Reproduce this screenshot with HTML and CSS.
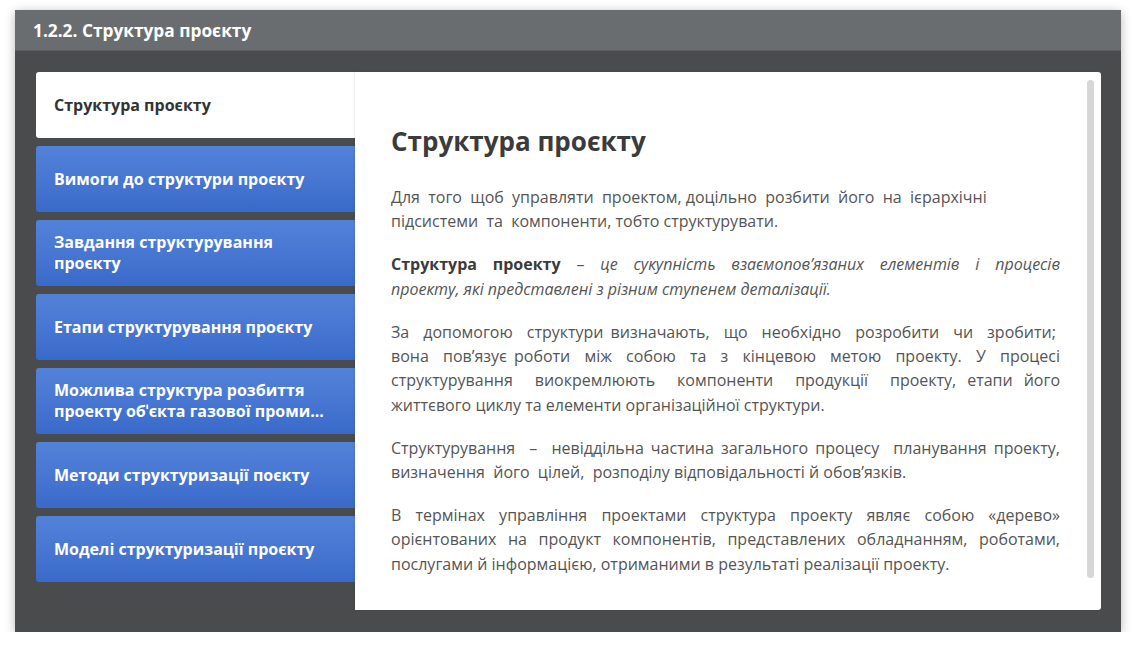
FILE: index.html
```html
<!DOCTYPE html>
<html lang="uk">
<head>
<meta charset="utf-8">
<link rel="stylesheet" href="styles.css">
</head>
<body>
<div class="window">
  <div class="titlebar">1.2.2. Структура проєкту</div>
  <div class="window-body">
    <div class="layout">
      <nav class="tabs">
        <div class="tab tab-active"><span>Структура проєкту</span></div>
        <div class="tab"><span>Вимоги до структури проєкту</span></div>
        <div class="tab"><span>Завдання структурування проєкту</span></div>
        <div class="tab"><span>Етапи структурування проєкту</span></div>
        <div class="tab"><span>Можлива структура розбиття проекту обˈєкта газової проми...</span></div>
        <div class="tab"><span>Методи структуризації поєкту</span></div>
        <div class="tab"><span>Моделі структуризації проєкту</span></div>
      </nav>
      <section class="panel">
        <article class="article">
          <h1 class="article-title">Структура проєкту</h1>
          <p class="para para-left">Для&nbsp; того&nbsp; щоб&nbsp; управляти&nbsp; проектом, доцільно&nbsp; розбити&nbsp; його&nbsp; на&nbsp; ієрархічні<br>підсистеми&nbsp; та&nbsp; компоненти, тобто структурувати.</p>
          <p class="para"><span class="line-just"><b class="term">Структура проекту</b> – <i>це сукупність взаємопов’язаних елементів і процесів</i></span><i>проекту, які представлені з різним ступенем деталізації.</i></p>
          <p class="para">За&nbsp; допомогою&nbsp; структури визначають,&nbsp; що&nbsp; необхідно&nbsp; розробити&nbsp; чи&nbsp; зробити;&nbsp; вона&nbsp; пов’язує роботи&nbsp; між&nbsp; собою&nbsp; та&nbsp; з&nbsp; кінцевою&nbsp; метою&nbsp; проекту.&nbsp; У&nbsp; процесі структурування&nbsp; виокремлюють&nbsp; компоненти&nbsp; продукції&nbsp; проекту, етапи його життєвого циклу та елементи організаційної структури.</p>
          <p class="para">Структурування&nbsp; –&nbsp; невіддільна частина загального процесу&nbsp; планування проекту, визначення&nbsp; його&nbsp; цілей,&nbsp; розподілу відповідальності й обов’язків.</p>
          <p class="para">В термінах управління проектами структура проекту являє собою «дерево» орієнтованих на продукт компонентів, представлених обладнанням, роботами, послугами й інформацією, отриманими в результаті реалізації проекту.</p>
        </article>
        <div class="scrollbar"></div>
      </section>
    </div>
  </div>
</div>
</body>
</html>
```
FILE: styles.css
```css
html, body {
  margin: 0;
  padding: 0;
  background: #ffffff;
}
body {
  font-family: "Open Sans", "Noto Sans", sans-serif;
  padding: 10px 0 0 15px;
}
.window {
  width: 1106px;
  height: 622px;
  display: flex;
  flex-direction: column;
  box-shadow: 0 2px 10px rgba(0, 0, 0, 0.28);
}
.titlebar {
  height: 41px;
  flex: none;
  background: #6a6d70;
  color: #ffffff;
  font-weight: 700;
  font-size: 17.3px;
  line-height: 41px;
  padding-left: 18px;
  border-bottom: 1px solid #5c5f62;
  box-sizing: border-box;
}
.window-body {
  flex: 1;
  background: #4a4b4d;
  padding: 21px 20px 22px 21px;
}
.layout {
  display: flex;
  height: 538px;
}
.tabs {
  width: 319px;
  flex: none;
  display: flex;
  flex-direction: column;
  gap: 8px;
}
.tab {
  height: 66px;
  flex: none;
  display: flex;
  align-items: center;
  padding: 0 30px 0 18px;
  box-sizing: border-box;
  border-radius: 3px 0 0 3px;
  background: linear-gradient(to bottom, #5282d8 0%, #4777d2 50%, #3a6ac9 100%);
  color: #ffffff;
  font-weight: 700;
  font-size: 16px;
  line-height: 21px;
}
.tab-active {
  background: #ffffff;
  color: #333333;
}
.panel {
  flex: 1;
  background: #ffffff;
  display: flex;
  border-radius: 0 3px 3px 0;
  box-shadow: -1px 0 2px rgba(0, 0, 0, 0.08);
}
.article {
  width: 669px;
  padding-left: 36px;
  color: #555555;
  font-size: 16px;
  line-height: 24.4px;
}
.article-title {
  margin: 51px 0 26px;
  font-size: 26px;
  line-height: 36px;
  font-weight: 700;
  color: #3b3b3b;
}
.para {
  margin: 0 0 18.5px;
  text-align: justify;
}
.para-left {
  text-align: left;
}
.line-just {
  display: block;
  text-align-last: justify;
}
.term {
  color: #3b3b3b;
}
.scrollbar {
  width: 7px;
  margin: 8px 6px 32px 27px;
  background: #d6d6d6;
  border-radius: 4px;
}
```
